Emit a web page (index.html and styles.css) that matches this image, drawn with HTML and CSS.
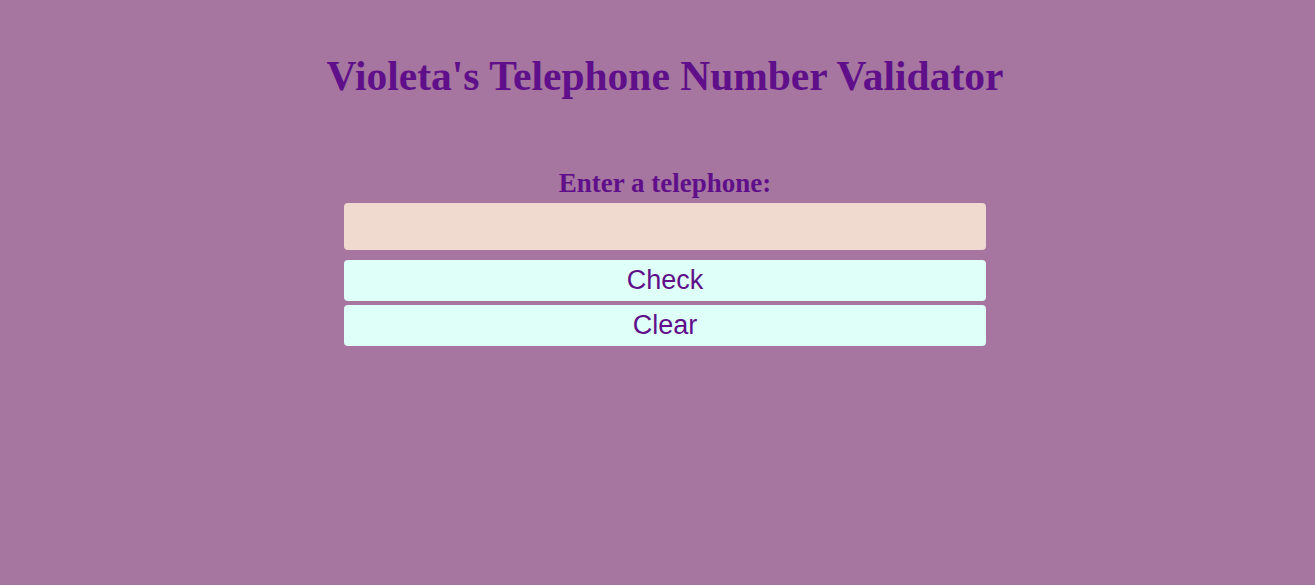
FILE: index.html
```html
<!DOCTYPE html>
<html lang="en">
<head>
<meta charset="utf-8">
<title>Telephone Number Validator</title>
<link rel="stylesheet" href="styles.css">
</head>
<body>
<main class="page">
  <h1 class="title">Violeta's Telephone Number Validator</h1>
  <div class="form">
    <label class="label" for="user-input">Enter a telephone:</label>
    <input class="phone-input" id="user-input" type="text">
    <button class="btn" id="check-btn">Check</button>
    <button class="btn" id="clear-btn">Clear</button>
  </div>
</main>
</body>
</html>
```
FILE: styles.css
```css
html, body {
  margin: 0;
  padding: 0;
  background: #a675a0;
  height: 100%;
}
body {
  padding-left: 15px;
  font-family: "Liberation Serif", "Times New Roman", serif;
  color: #5f0f8a;
}
.page {
  display: flex;
  flex-direction: column;
  align-items: center;
}
.title {
  margin: 51px 0 0;
  font-size: 41.5px;
  font-weight: bold;
  line-height: 50px;
}
.form {
  width: 642px;
  margin-top: 67px;
  display: flex;
  flex-direction: column;
  align-items: center;
}
.label {
  font-size: 27px;
  font-weight: bold;
  line-height: 30px;
  margin-bottom: 5px;
}
.phone-input {
  box-sizing: border-box;
  width: 100%;
  height: 47px;
  border: none;
  border-radius: 4px;
  background: #f0d9cf;
  margin: 0 0 10px;
  font-size: 24px;
}
.btn {
  box-sizing: border-box;
  width: 100%;
  height: 41px;
  border: none;
  border-radius: 4px;
  background: #dffff9;
  color: #5f0f8a;
  font-family: "Liberation Sans", Arial, sans-serif;
  font-size: 27px;
  margin: 0 0 4px;
  padding: 0;
}
```
